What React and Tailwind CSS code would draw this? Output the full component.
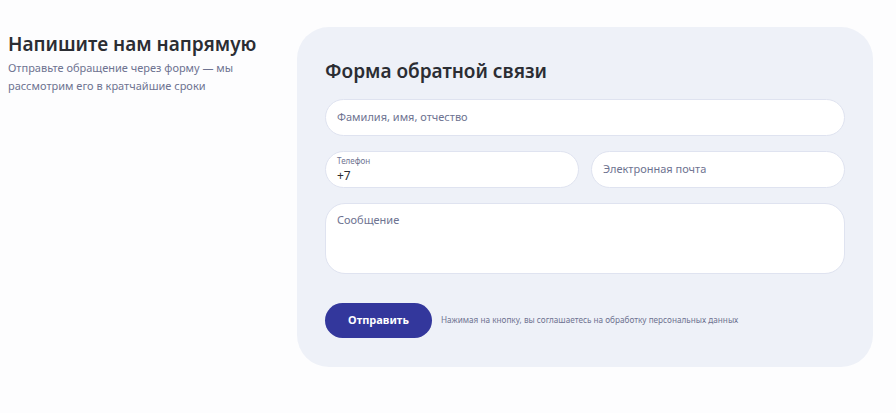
import React from "react";

const font = { fontFamily: '"Noto Sans", "Open Sans", sans-serif' };

export default function App() {
  return (
    <div
      className="min-h-screen w-full bg-[#fdfdfe] flex items-start px-2 pt-[27px] gap-[24px]"
      style={font}
    >
      <div className="w-[265px] shrink-0 pt-[3px]">
        <h2 className="text-[19px] leading-[28px] font-semibold text-[#2b2d33]">
          Напишите нам напрямую
        </h2>
        <p className="mt-[1px] text-[11px] leading-[18px] text-[#6e7391] w-[240px]">
          Отправьте обращение через форму — мы рассмотрим его в кратчайшие сроки
        </p>
      </div>

      <form className="w-[576px] shrink-0 bg-[#eef1f8] rounded-[32px] px-[28px] pt-[30px] pb-[29px] flex flex-col">
        <h1 className="text-[19px] leading-[28px] font-semibold text-[#2b2d33]">
          Форма обратной связи
        </h1>

        <div className="mt-[14px] flex flex-col gap-[15px]">
          <div className="h-[37px] rounded-full bg-white border border-[#dfe3f0] flex items-center px-[11px]">
            <span className="text-[11px] text-[#6e7391]">Фамилия, имя, отчество</span>
          </div>

          <div className="grid grid-cols-2 gap-[12px]">
            <div className="h-[37px] rounded-full bg-white border border-[#dfe3f0] flex flex-col justify-center px-[11px]">
              <span className="text-[8px] leading-[10px] text-[#6e7391]">Телефон</span>
              <span className="text-[12px] leading-[16px] mt-[2px] text-[#2b2d33]">+7</span>
            </div>
            <div className="h-[37px] rounded-full bg-white border border-[#dfe3f0] flex items-center px-[11px]">
              <span className="text-[11px] text-[#6e7391]">Электронная почта</span>
            </div>
          </div>

          <div className="h-[71px] rounded-[20px] bg-white border border-[#dfe3f0] px-[11px] pt-[8px] text-[11px] leading-[16px]">
            <span className="text-[#6e7391]">Сообщение</span>
          </div>
        </div>

        <div className="mt-[29px] flex items-center gap-[9px]">
          <button
            type="button"
            className="h-[35px] w-[107px] rounded-full bg-[#33379c] text-white text-[11px] font-bold"
          >
            Отправить
          </button>
          <span className="text-[8.2px] text-[#6e7391]">
            Нажимая на кнопку, вы соглашаетесь на обработку персональных данных
          </span>
        </div>
      </form>
    </div>
  );
}
